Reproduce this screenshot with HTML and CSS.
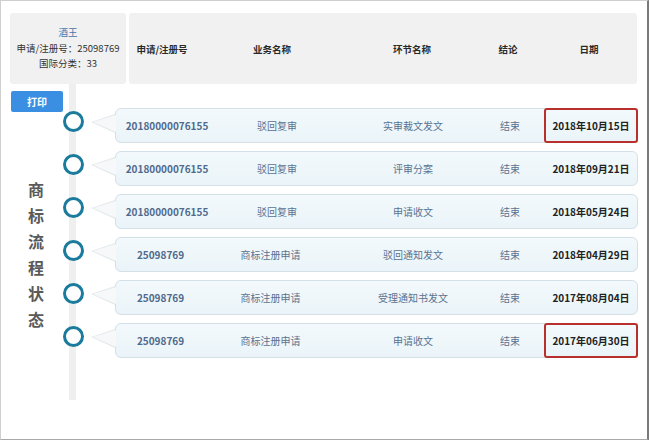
FILE: index.html
```html
<!DOCTYPE html>
<html lang="zh">
<head>
<meta charset="utf-8">
<link rel="stylesheet" href="styles.css">
</head>
<body>
<div class="frame">
  <div class="header">
    <div class="hl">
      <div class="brand">酒王</div>
      <div>申请/注册号：25098769</div>
      <div>国际分类：33</div>
    </div>
    <div class="hr">
      <div class="hc">申请/注册号</div>
      <div class="hc">业务名称</div>
      <div class="hc">环节名称</div>
      <div class="hc">结论</div>
      <div class="hc">日期</div>
    </div>
  </div>
  <div class="main">
    <div class="side">
      <div class="print">打印</div>
      <div class="title">商<br>标<br>流<br>程<br>状<br>态</div>
    </div>
    <div class="timeline">
      <div class="item">
        <div class="node"></div>
        <div class="bubble long">
          <div class="c num">20180000076155</div>
          <div class="c">驳回复审</div>
          <div class="c">实审裁文发文</div>
          <div class="c">结束</div>
          <div class="c date mark">2018年10月15日</div>
        </div>
      </div>
      <div class="item">
        <div class="node"></div>
        <div class="bubble long">
          <div class="c num">20180000076155</div>
          <div class="c">驳回复审</div>
          <div class="c">评审分案</div>
          <div class="c">结束</div>
          <div class="c date">2018年09月21日</div>
        </div>
      </div>
      <div class="item">
        <div class="node"></div>
        <div class="bubble long">
          <div class="c num">20180000076155</div>
          <div class="c">驳回复审</div>
          <div class="c">申请收文</div>
          <div class="c">结束</div>
          <div class="c date">2018年05月24日</div>
        </div>
      </div>
      <div class="item">
        <div class="node"></div>
        <div class="bubble short">
          <div class="c num">25098769</div>
          <div class="c">商标注册申请</div>
          <div class="c">驳回通知发文</div>
          <div class="c">结束</div>
          <div class="c date">2018年04月29日</div>
        </div>
      </div>
      <div class="item">
        <div class="node"></div>
        <div class="bubble short">
          <div class="c num">25098769</div>
          <div class="c">商标注册申请</div>
          <div class="c">受理通知书发文</div>
          <div class="c">结束</div>
          <div class="c date">2017年08月04日</div>
        </div>
      </div>
      <div class="item">
        <div class="node"></div>
        <div class="bubble short">
          <div class="c num">25098769</div>
          <div class="c">商标注册申请</div>
          <div class="c">申请收文</div>
          <div class="c">结束</div>
          <div class="c date mark">2017年06月30日</div>
        </div>
      </div>
    </div>
  </div>
</div>
</body>
</html>
```

FILE: styles.css
```css
* { box-sizing: border-box; }
html, body { margin: 0; padding: 0; background: #fff; }
body {
  font-family: "Noto Sans CJK SC", "Noto Sans", sans-serif;
  width: 650px;
  height: 441px;
  overflow: hidden;
}
.frame {
  width: 649px;
  height: 440px;
  border: 1px solid #cfcfcf;
  border-right: 2px solid #7a7a7a;
  border-bottom: 1px solid #a8a8a8;
  padding: 12px 9px 0 9px;
  background: #fff;
}
.header {
  display: flex;
  gap: 3px;
  height: 71px;
}
.hl {
  width: 116px;
  background: #f1f1f1;
  border-radius: 3px;
  display: flex;
  flex-direction: column;
  justify-content: center;
  align-items: center;
  font-size: 9.5px;
  line-height: 15.5px;
  color: #333;
}
.brand { color: #4a74ad; }
.hr {
  width: 508px;
  background: #f1f1f1;
  border-radius: 3px;
  display: grid;
  grid-template-columns: 66px 154px 126px 66px 96px;
  align-items: center;
  font-size: 9.5px;
  font-weight: 700;
  color: #2a2a2a;
}
.hc { display: flex; justify-content: center; white-space: nowrap; }
.main { display: flex; }
.side {
  width: 53px;
  display: flex;
  flex-direction: column;
  align-items: flex-start;
}
.print {
  margin-top: 7px;
  margin-left: 1px;
  width: 52px;
  height: 21px;
  background: #3b8fe2;
  border-radius: 2px;
  color: #fff;
  font-size: 10px;
  font-weight: 700;
  display: flex;
  align-items: center;
  justify-content: center;
}
.title {
  margin-top: 64px;
  width: 52px;
  text-align: center;
  font-size: 16px;
  line-height: 26px;
  font-weight: 700;
  color: #5a5a5a;
}
.timeline {
  flex: 1;
  height: 316px;
  padding-top: 24px;
  background: linear-gradient(#efefef, #efefef) no-repeat 6px 0 / 7px 100%;
}
.item {
  display: flex;
  align-items: flex-start;
  height: 35px;
  margin-bottom: 8px;
}
.node {
  width: 21px;
  height: 21px;
  margin-top: 3px;
  border: 3.5px solid #1b7b9d;
  border-radius: 50%;
  background: #fff;
  flex: none;
}
.bubble {
  position: relative;
  margin-left: 31px;
  width: 523px;
  height: 35px;
  border: 1px solid #d3e0e7;
  border-radius: 6px;
  background: linear-gradient(#f3f9fc, #eaf4f8);
  display: grid;
  grid-template-columns: 102px 118px 154px 40px 1fr;
  align-items: stretch;
  font-size: 10px;
  color: #5a7290;
}
.bubble.short { grid-template-columns: 89px 131px 154px 40px 1fr; }
.bubble::before {
  content: "";
  position: absolute;
  left: -25px;
  top: 5px;
  border-style: solid;
  border-width: 8px 24px 11px 0;
  border-color: transparent #e3e9ec transparent transparent;
}
.bubble::after {
  content: "";
  position: absolute;
  left: -23px;
  top: 6px;
  border-style: solid;
  border-width: 7px 23px 10px 0;
  border-color: transparent #f6f8f9 transparent transparent;
}
.c {
  display: flex;
  align-items: center;
  justify-content: center;
  white-space: nowrap;
}
.num { font-weight: 700; color: #4f6a8d; }
.date {
  font-weight: 700;
  color: #222;
  margin: -1px -1px -1px 14px;
  border: 2px solid transparent;
  border-radius: 3px;
}
.date.mark { border-color: #b8302c; }
```
